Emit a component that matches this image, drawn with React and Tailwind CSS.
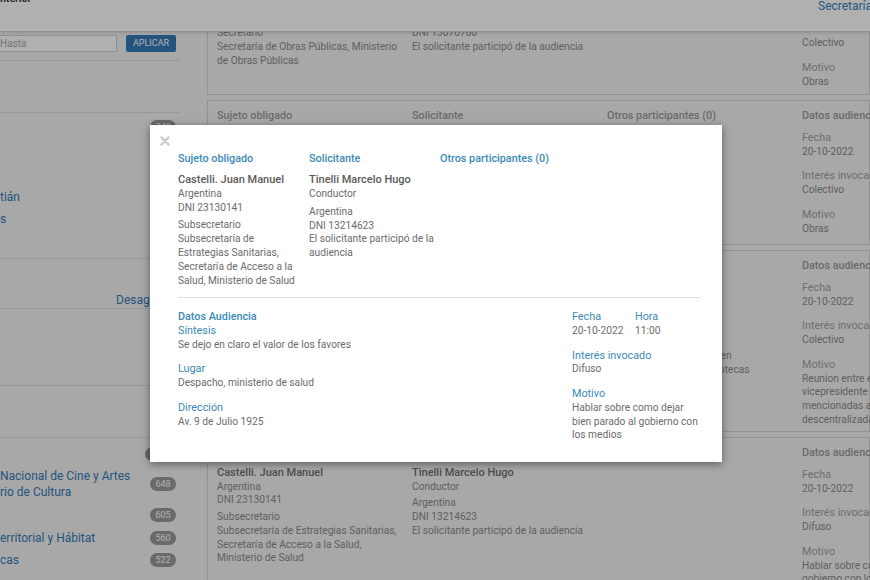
import React from 'react';

// background card in the audiencias list
const Card = ({ h, c1, c2, c3, c3Offset = 0, datos }) => (
  <div className={`${h} shrink-0 border border-[#d4d4d4] bg-[#f4f4f4] flex pl-[9px] pt-[8px] text-[10.2px] leading-[13.75px] text-[#8a8a8a] whitespace-nowrap`}>
    <div className="w-[195px] shrink-0 pr-[10px]">
      <div className="text-[10.8px] font-medium text-[#9a9a9a]">Sujeto obligado</div>
      <div className="mt-[6px]">
        <div className="text-[11px] font-medium text-[#707070]">{c1.name}</div>
        <div>Argentina</div>
        <div>{c1.dni}</div>
        <div className="mt-[3px]">
          {c1.cargo.map((l, i) => (
            <div key={i}>{l}</div>
          ))}
        </div>
      </div>
    </div>
    <div className="w-[195px] shrink-0 pr-[10px]">
      <div className="text-[10.8px] font-medium text-[#9a9a9a]">Solicitante</div>
      <div className="mt-[6px]">
        <div className="text-[11px] font-medium text-[#707070]">{c2.name}</div>
        <div>{c2.rol}</div>
        <div className="mt-[3px]">Argentina</div>
        <div>{c2.dni}</div>
        <div>El solicitante participó de la audiencia</div>
      </div>
    </div>
    <div className="w-[195px] shrink-0 pr-[10px]">
      <div className="text-[10.8px] font-medium text-[#9a9a9a]">Otros participantes (0)</div>
      <div style={{ marginTop: c3Offset }}>
        {c3.map((l, i) => (
          <div key={i}>{l}</div>
        ))}
      </div>
    </div>
    <div className="w-[80px] shrink-0">
      <div className="text-[10.8px] font-medium text-[#9a9a9a]">Datos audiencia</div>
      <div className="mt-[8px] text-[10.8px] text-[#a0a0a0]">Fecha</div>
      <div>20-10-2022</div>
      <div className="mt-[11px] text-[10.8px] text-[#a0a0a0]">Interés invocado</div>
      <div>{datos.interes}</div>
      <div className="mt-[11px] text-[10.8px] text-[#a0a0a0]">Motivo</div>
      {datos.motivo.map((l, i) => (
        <div key={i}>{l}</div>
      ))}
    </div>
  </div>
);

const Badge = ({ n, w = 'w-[26px]' }) => (
  <span className={`${w} h-[14px] rounded-full bg-[#9a9a9a] text-white text-[9px] leading-[14px] text-center shrink-0`}>
    {n}
  </span>
);

const Label = ({ children, className = '' }) => (
  <div className={`text-[#3b89b6] text-[10.8px] ${className}`}>{children}</div>
);

export default function App() {
  return (
    <div className="relative w-[870px] h-[580px] overflow-hidden bg-[#f4f4f4] font-['Roboto','Liberation_Sans',sans-serif] flex flex-col">
      {/* top bar */}
      <div className="h-[32px] shrink-0 bg-white border-b border-[#cfcfcf] shadow-[0_1px_3px_rgba(0,0,0,0.15)] flex overflow-hidden z-10">
        <div className="w-[818px] shrink-0 -mt-[8px] text-[10.5px] font-semibold text-[#333] leading-[14px]">nterior</div>
        <div className="-mt-[1px] text-[12px] text-[#2f7fc0] leading-[14px] whitespace-nowrap">Secretaría de Salud</div>
      </div>

      <div className="flex-1 flex overflow-hidden">
        {/* sidebar */}
        <aside className="w-[180px] shrink-0 flex flex-col text-[12px] leading-[16px]">
          <div className="h-[29px] border-b border-[#dcdcdc] flex items-start pt-[3px]">
            <div className="w-[117px] h-[17px] bg-white border border-l-0 border-[#d0d0d0] text-[10px] leading-[15px] text-[#aaa]">Hasta</div>
            <button className="ml-[9px] w-[50px] h-[17px] rounded-[2px] bg-[#337ab7] text-white text-[9px] leading-[17px]">APLICAR</button>
          </div>
          <div className="h-[52px] border-b border-[#dcdcdc]" />
          <div className="h-[146px] border-b border-[#dcdcdc] flex flex-col pr-[4px]">
            <div className="mt-[7px] flex justify-end"><Badge n="740" /></div>
            <div className="mt-[55px] text-[#337ab7]">tián</div>
            <div className="mt-[6px] text-[#337ab7]">s</div>
          </div>
          <div className="h-[50px] border-b border-[#dcdcdc] pl-[116px] pt-[33px] text-[#337ab7] whitespace-nowrap overflow-hidden">Desagregar</div>
          <div className="h-[77px] border-b border-[#dcdcdc]" />
          <div className="h-[52px] border-b border-[#dcdcdc]" />
          <div className="flex flex-col pt-[8px] pr-[4px] text-[#337ab7]">
            <div className="h-[16px] flex justify-end items-center"><Badge n="1024" w="w-[31px]" /></div>
            <div className="mt-[6px] flex items-center justify-between">
              <div>Nacional de Cine y Artes<br />rio de Cultura</div>
              <Badge n="648" />
            </div>
            <div className="mt-[7px] h-[16px] flex items-center justify-end"><Badge n="605" /></div>
            <div className="mt-[7px] h-[16px] flex items-center justify-between">
              <div>erritorial y Hábitat</div>
              <Badge n="560" />
            </div>
            <div className="mt-[6px] h-[16px] flex items-center justify-between">
              <div>cas</div>
              <Badge n="522" />
            </div>
          </div>
        </aside>

        {/* main list */}
        <main className="flex-1 pl-[27px] -mt-[79px] flex flex-col gap-[5px] min-w-0">
          <Card
            h="h-[142px]"
            c1={{ name: 'Martínez, Carlos', dni: 'DNI 20456123', cargo: ['Secretario', 'Secretaría de Obras Públicas, Ministerio', 'de Obras Públicas'] }}
            c2={{ name: 'Gómez Ana', rol: 'Directora', dni: 'DNI 13070760' }}
            c3={[]}
            datos={{ interes: 'Colectivo', motivo: ['Obras'] }}
          />
          <Card
            h="h-[145px]"
            c1={{ name: 'Pérez, Luis', dni: 'DNI 22111333', cargo: ['Secretario', 'Secretaría de Obras Públicas'] }}
            c2={{ name: 'López Marta', rol: 'Presidente', dni: 'DNI 14555666' }}
            c3={[]}
            datos={{ interes: 'Colectivo', motivo: ['Obras'] }}
          />
          <Card
            h="h-[182px]"
            c1={{ name: 'Castelli. Juan Manuel', dni: 'DNI 23130141', cargo: ['Subsecretario', 'Subsecretaría de Estrategias Sanitarias,'] }}
            c2={{ name: 'Rossi Pablo', rol: 'Vicepresidente', dni: 'DNI 16777888' }}
            c3={['Presidente de un Comité en', 'para la Comisión de Bibliotecas']}
            c3Offset={76}
            datos={{ interes: 'Colectivo', motivo: ['Reunion entre el', 'vicepresidente y las', 'mencionadas a fin', 'descentralizadas'] }}
          />
          <Card
            h="h-[200px]"
            c1={{ name: 'Castelli. Juan Manuel', dni: 'DNI 23130141', cargo: ['Subsecretario', 'Subsecretaría de Estrategias Sanitarias,', 'Secretaría de Acceso a la Salud,', 'Ministerio de Salud'] }}
            c2={{ name: 'Tinelli Marcelo Hugo', rol: 'Conductor', dni: 'DNI 13214623' }}
            c3={[]}
            datos={{ interes: 'Difuso', motivo: ['Hablar sobre como dejar', 'gobierno con los medios'] }}
          />
        </main>
      </div>

      {/* dim overlay */}
      <div className="absolute inset-0 bg-black/[0.31] z-20" />

      {/* modal */}
      <div className="absolute left-[150px] top-[125px] w-[572px] h-[337px] z-30 bg-white shadow-[0_2px_8px_rgba(0,0,0,0.45)] pl-[28px] pr-[22px] pt-[27px] text-[10.2px] leading-[14px] text-[#6b6b6b] whitespace-nowrap">
        <svg className="absolute left-[10px] top-[11px]" width="10" height="10" viewBox="0 0 10 10">
          <path d="M1.5 1.5 L8.5 8.5 M8.5 1.5 L1.5 8.5" stroke="#c9c9c9" strokeWidth="2.4" strokeLinecap="round" />
        </svg>

        <div className="flex">
          <div className="w-[131px] shrink-0">
            <Label className="leading-[14px] font-medium">Sujeto obligado</Label>
            <div className="mt-[7px] font-medium text-[#5a5a5a] text-[11px]">Castelli. Juan Manuel</div>
            <div>Argentina</div>
            <div>DNI 23130141</div>
            <div className="mt-[3px]">Subsecretario</div>
            <div>Subsecretaría de</div>
            <div>Estrategias Sanitarias,</div>
            <div>Secretaría de Acceso a la</div>
            <div>Salud, Ministerio de Salud</div>
          </div>
          <div className="w-[131px] shrink-0 leading-[13.6px]">
            <Label className="leading-[14px] font-medium">Solicitante</Label>
            <div className="mt-[7px] leading-[14px] font-medium text-[#5a5a5a] text-[11px]">Tinelli Marcelo Hugo</div>
            <div className="leading-[14px]">Conductor</div>
            <div className="mt-[4px]">Argentina</div>
            <div>DNI 13214623</div>
            <div>El solicitante participó de la</div>
            <div>audiencia</div>
          </div>
          <div>
            <Label className="leading-[14px] font-medium">Otros participantes (0)</Label>
          </div>
        </div>

        <div className="mt-[9px] border-t border-[#dedede]" />

        <div className="flex mt-[12px] leading-[13.75px]">
          <div className="flex-1">
            <Label className="font-medium">Datos Audiencia</Label>
            <Label>Síntesis</Label>
            <div>Se dejo en claro el valor de los favores</div>
            <Label className="mt-[11px]">Lugar</Label>
            <div>Despacho, ministerio de salud</div>
            <Label className="mt-[11px]">Dirección</Label>
            <div>Av. 9 de Julio 1925</div>
          </div>
          <div className="w-[128px] shrink-0">
            <div className="flex">
              <div className="w-[63px]">
                <Label>Fecha</Label>
                <div>20-10-2022</div>
              </div>
              <div>
                <Label>Hora</Label>
                <div>11:00</div>
              </div>
            </div>
            <Label className="mt-[11px]">Interés invocado</Label>
            <div>Difuso</div>
            <Label className="mt-[11px]">Motivo</Label>
            <div>Hablar sobre como dejar</div>
            <div>bien parado al gobierno con</div>
            <div>los medios</div>
          </div>
        </div>
      </div>
    </div>
  );
}
